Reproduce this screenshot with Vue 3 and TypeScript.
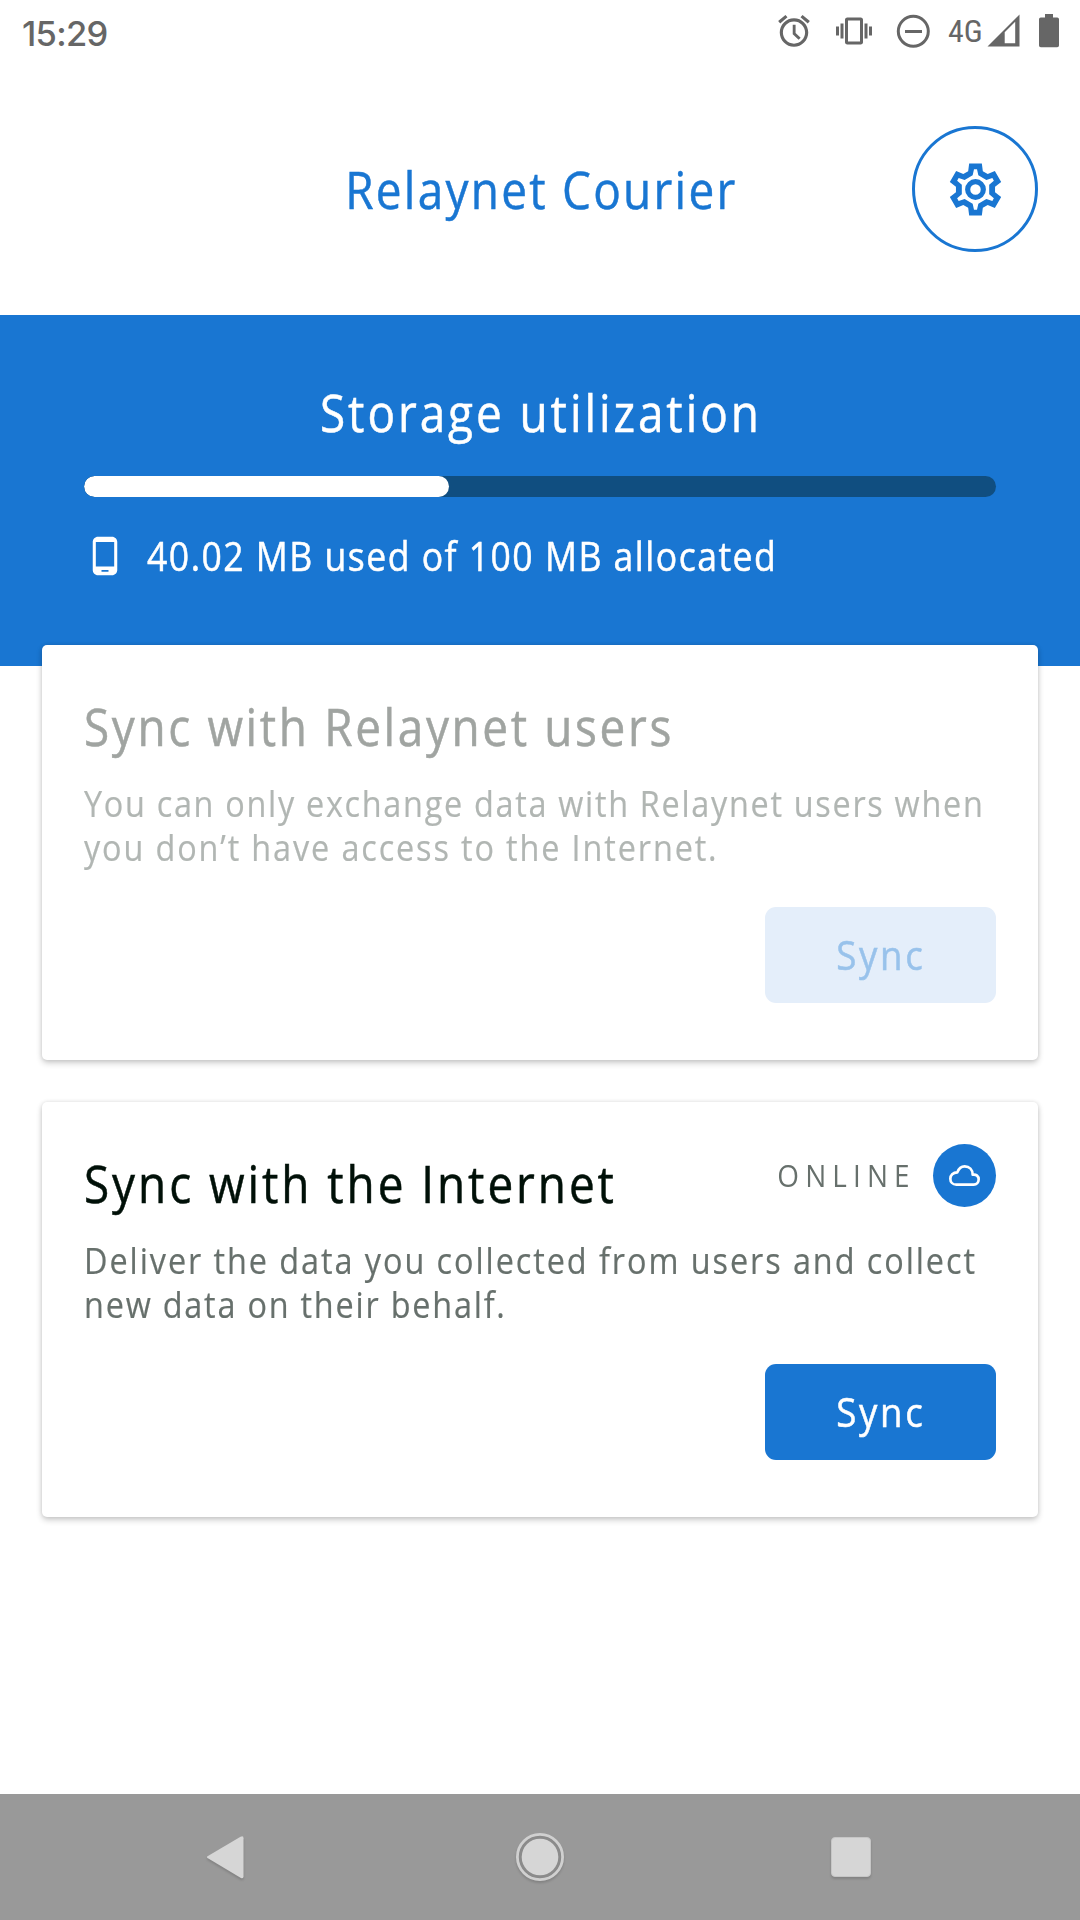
<script setup lang="ts">
import { computed } from 'vue'

const usedMb = 40.02
const allocatedMb = 100
const fill = computed(() => `${(usedMb / allocatedMb) * 100}%`)

type Point = [number, number]

// Repeats one tooth profile six times round the gear's centre.
function gearPath(profile: Point[]): string {
  const points: string[] = []
  for (let tooth = 0; tooth < 6; tooth++) {
    const a = (tooth * Math.PI) / 3
    for (const [x, y] of profile) {
      const px = x * Math.cos(a) - y * Math.sin(a)
      const py = x * Math.sin(a) + y * Math.cos(a)
      points.push(`${px.toFixed(2)} ${py.toFixed(2)}`)
    }
  }
  return `M${points.join('L')}Z`
}

const gear =
  gearPath([[-22, -55], [-19, -78], [19, -78], [22, -55]]) +
  gearPath([[-8.5, -42.5], [-4.5, -61], [4.5, -61], [8.5, -42.5]])
</script>

<template>
  <div class="screen">
    <div class="status-bar">
      <span class="clock">15:29</span>
      <svg class="alarm" viewBox="0 0 24 24"><path d="M22 5.72l-4.6-3.86-1.29 1.53 4.6 3.86L22 5.72zM7.88 3.39L6.6 1.86 2 5.71l1.29 1.53 4.59-3.85zM11.200 8h1.800v5.200l3.200 3.100-1.300 1.300-3.700-3.600zM12 4c-4.97 0-9 4.03-9 9s4.02 9 9 9c4.97 0 9-4.03 9-9s-4.03-9-9-9zm0 16c-3.87 0-7-3.13-7-7s3.13-7 7-7 7 3.13 7 7-3.13 7-7 7z" /></svg>
      <svg class="vibrate" viewBox="0 0 24 24"><path d="M0 15h2V9H0v6zm3 2h2V7H3v10zm19-8v6h2V9h-2zm-3 8h2V7h-2v10zM16.5 3h-9C6.67 3 6 3.67 6 4.5v15c0 .83.67 1.5 1.5 1.5h9c.83 0 1.5-.67 1.5-1.5v-15c0-.83-.67-1.5-1.5-1.5zM16 19H8V5h8v14z" /></svg>
      <svg class="dnd" viewBox="0 0 36 36"><circle cx="18.3" cy="18.3" r="15" fill="none" stroke="#666" stroke-width="3" /><path d="M10 17h17v3H10z" /></svg>
      <span class="network">4G</span>
      <svg class="signal" viewBox="0 0 33 34"><path fill-rule="evenodd" d="M.5 32.5 32.5.5v32zM17.7 18.2v11h10.5V7.7z" /></svg>
      <svg class="battery" viewBox="0 0 20 34"><path d="M6 0h8v3.5h4.2q1.8 0 1.8 1.8v26.2q0 1.8-1.8 1.8H1.800q-1.800 0-1.800-1.800V5.300q0-1.800 1.800-1.800H6z" /></svg>
    </div>

    <header class="header">
      <h1 class="title">Relaynet Courier</h1>
      <button class="settings" aria-label="Settings">
        <svg viewBox="-94.500 -94.500 189 189">
          <path fill-rule="evenodd" :d="gear" />
          <circle r="23.500" fill="none" stroke="#1976d2" stroke-width="15.500" />
        </svg>
      </button>
    </header>

    <section class="storage">
      <h2 class="storage-title">Storage utilization</h2>
      <div class="track"><div class="fill" :style="{ width: fill }"></div></div>
      <div class="usage">
        <svg class="phone" viewBox="0 0 24 24"><path d="M16 1H8C6.340 1 5 2.340 5 4v16c0 1.660 1.340 3 3 3h8c1.660 0 3-1.340 3-3V4c0-1.660-1.340-3-3-3zm-2 20h-4v-1h4v1zm3.250-3H6.750V4h10.500v14z" /></svg>
        <span class="usage-text">40.02 MB used of 100 MB allocated</span>
      </div>
    </section>

    <main class="cards">
      <article class="card disabled">
        <div class="card-head"><h3 class="card-title users-title">Sync with Relaynet users</h3></div>
        <p class="card-text">
          <span class="line users-1">You can only exchange data with Relaynet users when</span>
          <span class="line users-2">you don’t have access to the Internet.</span>
        </p>
        <button class="sync" disabled><span class="sync-label">Sync</span></button>
      </article>

      <article class="card">
        <div class="card-head">
          <h3 class="card-title net-title">Sync with the Internet</h3>
          <div class="online">
            <span class="online-label">ONLINE</span>
            <span class="online-badge">
              <svg viewBox="0 0 93 63"><path d="M22 59C11 59 4 51 4 41S12 22 25 22C29 11 37 4 47 4C61 4 71 14 71 29C82 27 89 34 89 43S83 59 74 59Z" fill="none" stroke="#fff" stroke-width="8" stroke-linejoin="round" /></svg>
            </span>
          </div>
        </div>
        <p class="card-text">
          <span class="line net-1">Deliver the data you collected from users and collect</span>
          <span class="line net-2">new data on their behalf.</span>
        </p>
        <button class="sync"><span class="sync-label">Sync</span></button>
      </article>
    </main>

    <nav class="nav-bar">
      <svg class="nav-icon" viewBox="0 0 60 60"><path d="M13.500 29.300 46.500 9.700q3-1.500 3 1.500v38q0 3-3 1.500L13.500 30.900q-1.200-.8 0-1.600z" /></svg>
      <svg class="nav-icon home" viewBox="0 0 60 60"><circle cx="30" cy="30" r="21" fill="#8b8b8b" /><circle cx="30" cy="30" r="22.600" fill="none" stroke="#d0d0d0" stroke-width="2.800" /><circle cx="30" cy="30" r="18.300" /></svg>
      <svg class="nav-icon recents" viewBox="0 0 60 60"><rect x="10.500" y="10.500" width="39" height="39" rx="3.500" stroke="#c6c6c6" /></svg>
    </nav>
  </div>
</template>

<style>
body {
  margin: 0;
  background: #fff;
}
</style>

<style scoped>
.screen {
  width: 1080px;
  height: 1920px;
  display: flex;
  flex-direction: column;
  overflow: hidden;
  background: #fff;
  font-family: "Open Sans", "Noto Sans", sans-serif;
}
h1, h2, h3, p {
  margin: 0;
  font-weight: 400;
  white-space: nowrap;
}
svg {
  display: block;
  flex: none;
}
button {
  padding: 0;
  font: inherit;
}

.status-bar {
  height: 63px;
  flex: none;
  box-sizing: border-box;
  padding: 0 21px 0 22px;
  display: flex;
  align-items: flex-start;
  color: #666;
  fill: #666;
}
.clock {
  margin-right: auto;
  margin-top: 12px;
  font: 500 34.5px/44px Inter, sans-serif;
  letter-spacing: -0.7px;
}
.alarm { width: 38px; height: 38px; margin-top: 12px; }
.vibrate { width: 36px; height: 36px; margin: 13px 0 0 23px; }
.dnd { width: 36px; height: 36px; margin: 13px 0 0 23px; }
.network {
  width: 39px;
  margin: 9px 0 0 17px;
  font-family: Roboto, sans-serif;
  font-size: 32px;
  line-height: 44px;
  font-stretch: 75%;
}
.signal { width: 33px; height: 34px; margin-top: 14px; }
.battery { width: 20px; height: 34px; margin: 14px 0 0 19px; }

.header {
  height: 252px;
  flex: none;
  box-sizing: border-box;
  padding: 0 42px;
  display: grid;
  grid-template-columns: 126px 1fr 126px;
  align-items: center;
}
/* The typeface is drawn a little narrower than its natural width. */
.title, .storage-title, .usage-text, .card-title, .line, .online-label {
  transform: scaleX(0.9);
}
.title, .storage-title, .usage-text, .card-title, .sync-label {
  -webkit-text-stroke: 0.5px currentColor;
}
.title {
  grid-column: 2;
  padding-left: 3px;
  text-align: center;
  font-size: 51px;
  line-height: 60px;
  letter-spacing: 2.53px;
  color: #1976d2;
}
.settings {
  width: 126px;
  height: 126px;
  box-sizing: border-box;
  border: 3px solid #1976d2;
  border-radius: 50%;
  background: #fff;
  display: flex;
  align-items: center;
  justify-content: center;
}
.settings svg {
  width: 63px;
  height: 63px;
  fill: #1976d2;
}

.storage {
  height: 351px;
  flex: none;
  box-sizing: border-box;
  padding: 67px 84px 0;
  background: #1976d2;
  color: #fff;
}
.storage-title {
  padding-left: 2px;
  text-align: center;
  font-size: 51px;
  line-height: 60px;
  letter-spacing: 3.26px;
}
.track {
  height: 21px;
  margin-top: 34px;
  border-radius: 11px;
  background: #104e80;
  overflow: hidden;
}
.fill {
  height: 100%;
  border-radius: 11px;
  background: #fff;
}
.usage {
  height: 49px;
  margin-top: 34px;
  display: flex;
  align-items: center;
}
.phone { width: 42px; height: 42px; fill: #fff; }
.usage-text {
  margin-left: 21px;
  padding-top: 2px;
  font-size: 39.5px;
  line-height: 49px;
  letter-spacing: 1.66px;
  white-space: nowrap;
  transform-origin: left center;
}

.cards {
  flex: 1;
  margin-top: -21px;
  padding: 0 42px;
  display: flex;
  flex-direction: column;
  gap: 42px;
}
.card {
  height: 415px;
  box-sizing: border-box;
  padding: 51px 42px 57px;
  display: flex;
  flex-direction: column;
  border-radius: 5px;
  background: #fff;
  box-shadow: 0 3px 6px rgba(0, 0, 0, 0.2), 0 0 4px rgba(0, 0, 0, 0.1);
}
.card-head {
  height: 60px;
  display: flex;
  align-items: flex-start;
  justify-content: space-between;
}
.card-title {
  font-size: 51px;
  line-height: 60px;
  color: #001008;
  transform-origin: left center;
}
.users-title { letter-spacing: 2.93px; }
.net-title { letter-spacing: 3.27px; }
.card-text {
  margin-top: 26px;
  font-size: 36px;
  line-height: 44px;
  color: #67706c;
  -webkit-text-stroke: 0.2px currentColor;
}
.line {
  display: block;
  width: max-content;
  transform-origin: left center;
}
.users-1 { letter-spacing: 1.89px; }
.users-2 { letter-spacing: 2.08px; }
.net-1 { letter-spacing: 2.15px; }
.net-2 { letter-spacing: 1.98px; }
.sync {
  width: 231px;
  height: 96px;
  margin-top: 37px;
  align-self: flex-end;
  border: 0;
  border-radius: 11px;
  background: #1976d2;
  color: #fff;
  display: flex;
  align-items: center;
  justify-content: center;
}
.sync-label {
  font-size: 39.5px;
  line-height: 96px;
  letter-spacing: 2.8px;
  transform: scaleX(0.93);
}
.disabled .card-title { color: #a0a4a1; }
.disabled .card-text { color: #b1b6b3; }
.disabled .sync {
  background: #e4eefa;
  color: #98c2eb;
}
.online {
  height: 63px;
  margin-top: -9px;
  display: flex;
  align-items: center;
}
.online-label {
  margin-right: 17px;
  padding-bottom: 1px;
  font-size: 31px;
  line-height: 60px;
  letter-spacing: 6.8px;
  color: #67706c;
  transform-origin: right center;
}
.online-badge {
  width: 63px;
  height: 63px;
  border-radius: 50%;
  background: #1976d2;
  display: flex;
  align-items: center;
  justify-content: center;
}
.online-badge svg { width: 31px; height: 21px; }

.nav-bar {
  height: 126px;
  flex: none;
  box-sizing: border-box;
  padding-left: 194px;
  display: flex;
  align-items: center;
  background: #999;
}
.nav-icon {
  width: 60px;
  height: 60px;
  fill: #d6d6d6;
  filter: drop-shadow(0 2px 1px rgba(0, 0, 0, 0.15));
}
.home { margin-left: 256px; }
.recents { margin-left: 251px; }
</style>
